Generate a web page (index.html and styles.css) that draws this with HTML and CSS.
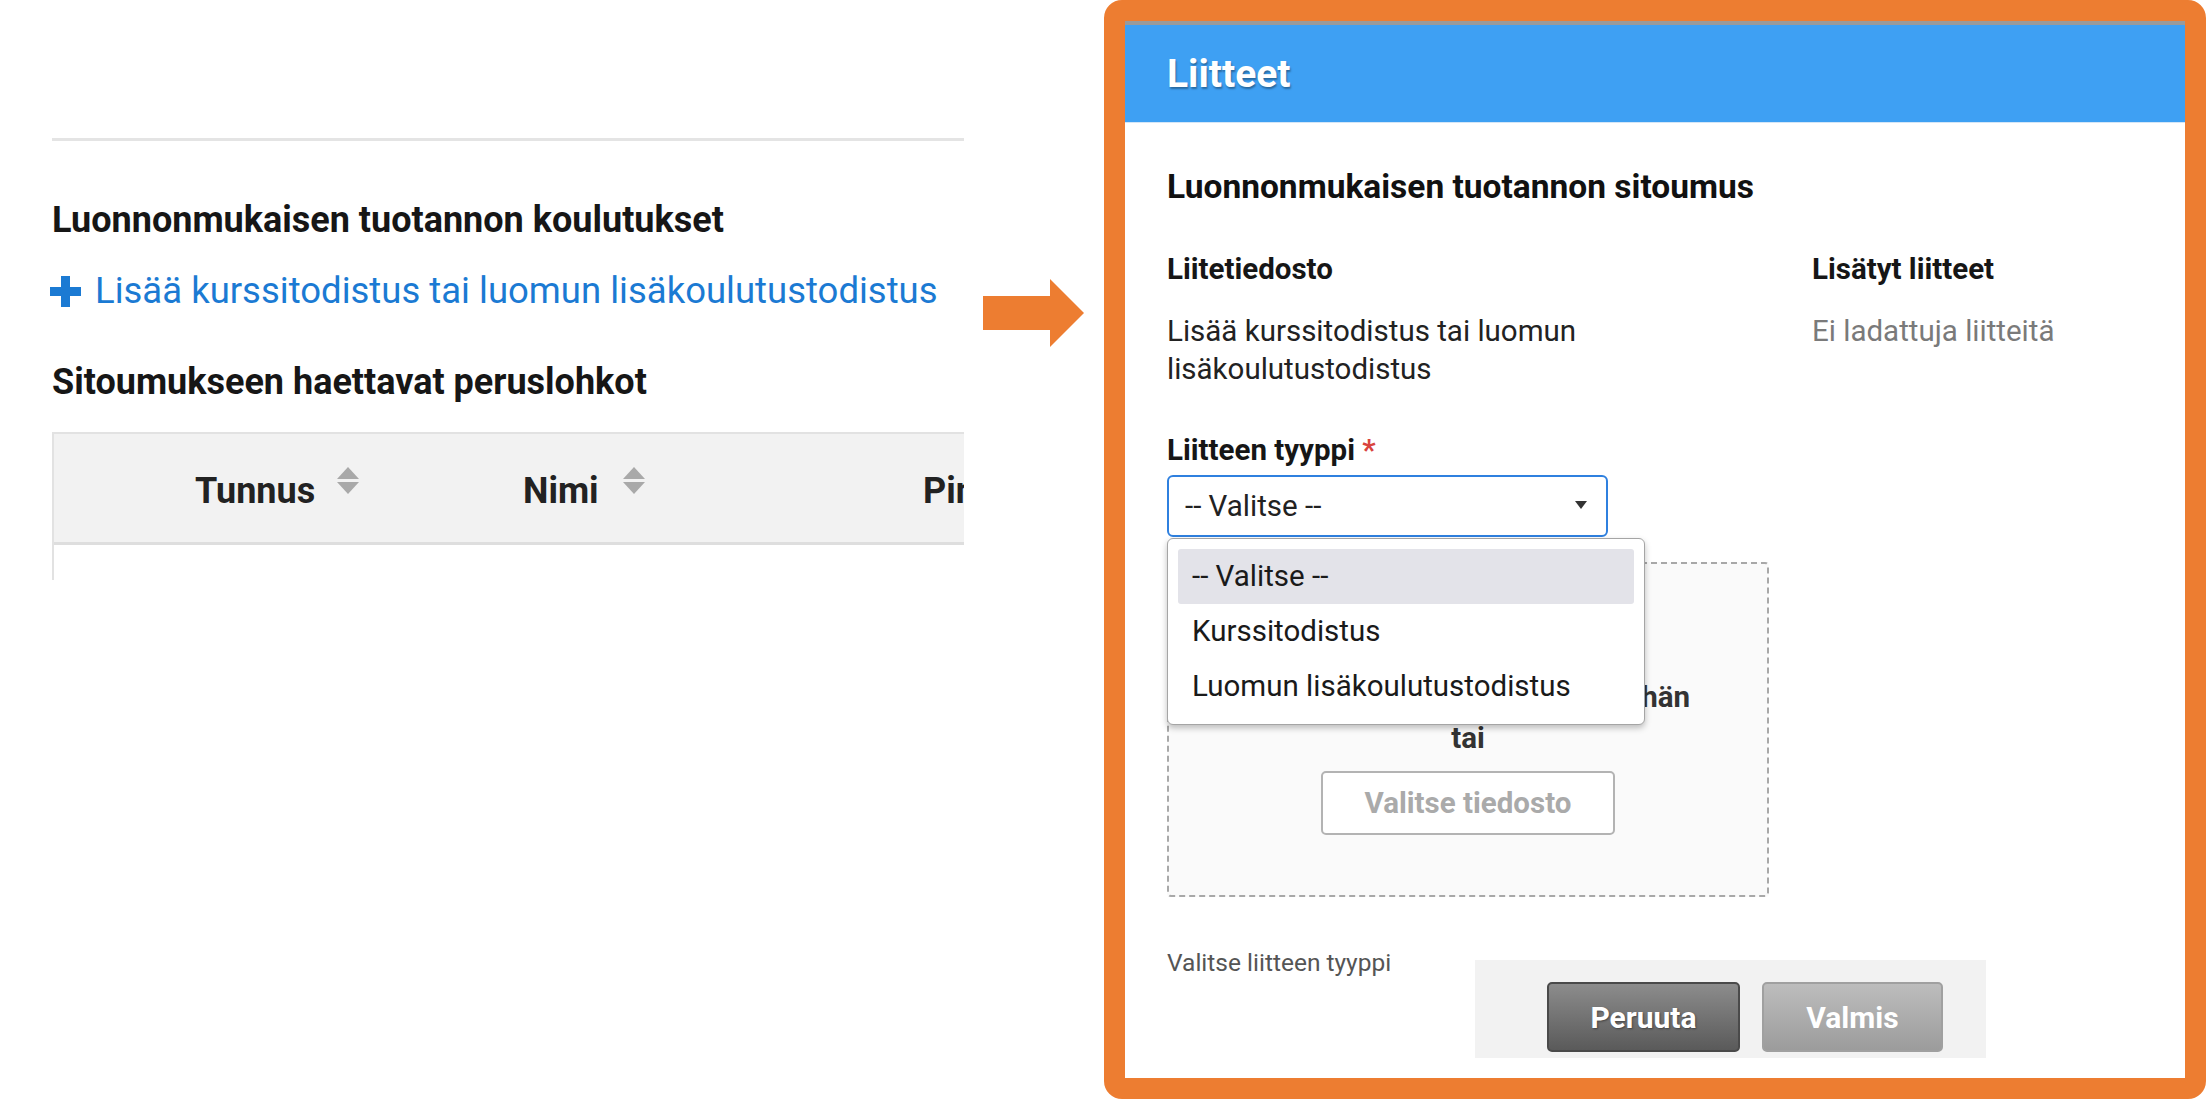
FILE: index.html
```html
<!DOCTYPE html>
<html>
<head>
	<title>Liitteet</title>

	<link rel="stylesheet" href="styles.css">

</head>
<body>

	<div class="stage">

		<!-- sivun sisältö taustalla -->
		<section class="page">
			<hr class="rule">
			<h3 class="section-title">Luonnonmukaisen tuotannon koulutukset</h3>
			<a class="add-link" href="#">
				<svg class="plus" width="31" height="31" viewBox="0 0 31 31"><rect x="11" y="0" width="9" height="31"/><rect x="0" y="11" width="31" height="9"/></svg>
				Lisää kurssitodistus tai luomun lisäkoulutustodistus
			</a>
			<h3 class="section-title second">Sitoumukseen haettavat peruslohkot</h3>

			<div class="table">
				<div class="thead">
					<div class="th th-tunnus">Tunnus
						<svg class="sort" width="22" height="28" viewBox="0 0 22 28"><polygon points="11,0 22,12 0,12"/><polygon points="0,15 22,15 11,27"/></svg>
					</div>
					<div class="th th-nimi">Nimi
						<svg class="sort" width="22" height="28" viewBox="0 0 22 28"><polygon points="11,0 22,12 0,12"/><polygon points="0,15 22,15 11,27"/></svg>
					</div>
					<div class="th">Pinta-ala</div>
				</div>
				<div class="tbody"></div>
			</div>
		</section>

		<div class="arrow">
			<svg width="101" height="68" viewBox="0 0 101 68"><polygon points="0,17 67,17 67,0 101,34 67,68 67,51 0,51"/></svg>
		</div>

		<!-- liitteet-dialogi -->
		<div class="frame">
			<div class="modal">
				<div class="modal-head">Liitteet</div>

				<div class="modal-body">
					<h4 class="modal-title">Luonnonmukaisen tuotannon sitoumus</h4>

					<div class="attach-grid">
						<div class="col-left">
							<div class="col-title">Liitetiedosto</div>
							<div class="desc">Lisää kurssitodistus tai luomun lisäkoulutustodistus</div>

							<div class="field-label">Liitteen tyyppi <span class="req">*</span></div>
							<div class="select-wrap">
								<div class="select">
									<span>-- Valitse --</span>
									<svg width="12" height="8" viewBox="0 0 12 8"><polygon points="0,0 12,0 6,8"/></svg>
								</div>
								<div class="dropdown">
									<div class="option active">-- Valitse --</div>
									<div class="option">Kurssitodistus</div>
									<div class="option">Luomun lisäkoulutustodistus</div>
								</div>
							</div>

							<div class="dropzone">
								<div class="drop-text">Vedä ja pudota liitetiedosto tähän</div>
								<div class="drop-text">tai</div>
								<button class="file-btn">Valitse tiedosto</button>
							</div>
						</div>

						<div class="col-right">
							<div class="col-title">Lisätyt liitteet</div>
							<div class="desc muted">Ei ladattuja liitteitä</div>
						</div>
					</div>

					<div class="modal-foot">
						<div class="hint">Valitse liitteen tyyppi</div>
						<div class="actions">
							<button class="btn btn-dark">Peruuta</button>
							<button class="btn btn-light">Valmis</button>
						</div>
					</div>
				</div>
			</div>
		</div>

	</div>

</body>
</html>
```

FILE: styles.css
```css
	body{
		margin: 0;
		background: #fff;
		font-family: Roboto, "Liberation Sans", sans-serif;
		color: #1a1a1a;
		overflow: hidden;
	}

	.stage{
		display: flex;
		align-items: flex-start;
		width: 2206px;
		height: 1099px;
	}

	/* vasen puoli */
	.page{
		width: 964px;
		height: 580px;
		padding: 138px 0 0 52px;
		box-sizing: border-box;
		overflow: hidden;
		flex: none;
	}

	.rule{
		margin: 0;
		border: 0;
		border-top: 3px solid #e4e4e4;
	}

	.section-title{
		margin: 58px 0 0;
		font-size: 36px;
		line-height: 42px;
		font-weight: 700;
		color: #161616;
		white-space: nowrap;
	}

	.section-title.second{
		margin-top: 49px;
	}

	.add-link{
		display: flex;
		align-items: center;
		gap: 14px;
		margin-top: 29px;
		font-size: 36.5px;
		line-height: 42px;
		color: #1b7ad3;
		text-decoration: none;
		white-space: nowrap;
	}

	.plus{
		fill: #1b7ad3;
		margin-left: -2px;
	}

	.table{
		width: 1300px;
		margin-top: 29px;
		border-top: 2px solid #e2e2e2;
		border-left: 2px solid #e2e2e2;
	}

	.thead{
		display: flex;
		height: 111px;
		padding-top: 6px;
		box-sizing: border-box;
		align-items: center;
		background: #f2f2f2;
		border-bottom: 3px solid #dedede;
	}

	.th{
		display: flex;
		align-items: flex-start;
		gap: 22px;
		font-size: 36px;
		line-height: 42px;
		font-weight: 700;
		color: #222;
		white-space: nowrap;
	}

	.th-tunnus{
		width: 468px;
		padding-left: 141px;
		box-sizing: border-box;
	}

	.th-nimi{
		width: 401px;
		padding-left: 1px;
		box-sizing: border-box;
		gap: 24px;
	}

	.sort{
		fill: #a9a9a9;
		margin-top: -3px;
	}

	.tbody{
		height: 40px;
	}

	/* nuoli */
	.arrow{
		margin: 279px 0 0 19px;
		width: 101px;
		height: 68px;
		flex: none;
	}

	.arrow svg{
		display: block;
		fill: #ed7d31;
	}

	/* dialogi */
	.frame{
		margin-left: 20px;
		width: 1102px;
		height: 1099px;
		border: 21px solid #ed7d31;
		border-radius: 18px;
		box-sizing: border-box;
		background: #fff;
		flex: none;
		overflow: hidden;
	}

	.modal-head{
		height: 97px;
		border-top: 4px solid #9a9a9a;
		background: #3ea0f3;
		display: flex;
		align-items: center;
		padding-left: 42px;
		font-size: 39px;
		font-weight: 700;
		color: #fff;
		text-shadow: 1px 2px 2px rgba(0,0,0,.35);
		box-shadow: 0 1px 0 #d4e6f7;
	}

	.modal-body{
		padding: 45px 42px 0;
		font-size: 29.5px;
		line-height: 38px;
		color: #222;
	}

	.modal-title{
		margin: 0;
		font-size: 33.5px;
		line-height: 40px;
		font-weight: 700;
		color: #111;
	}

	.attach-grid{
		display: grid;
		grid-template-columns: 645px 1fr;
		margin-top: 43px;
	}

	.col-title{
		font-weight: 700;
		color: #161616;
	}

	.desc{
		margin-top: 24px;
		padding-right: 40px;
	}

	.muted{
		color: #7a7a7a;
		padding-right: 0;
	}

	.field-label{
		margin-top: 43px;
		font-weight: 700;
		color: #161616;
	}

	.req{
		color: #d9443d;
	}

	.select-wrap{
		position: relative;
		margin-top: 6px;
	}

	.select{
		width: 441px;
		height: 62px;
		box-sizing: border-box;
		border: 2px solid #2f80df;
		border-radius: 6px;
		display: flex;
		align-items: center;
		justify-content: space-between;
		padding: 0 19px 0 16px;
		background: #fff;
	}

	.select svg{
		fill: #333;
		margin-top: -3px;
	}

	.dropdown{
		position: absolute;
		top: 63px;
		left: 0;
		width: 478px;
		box-sizing: border-box;
		padding: 10px;
		background: #fff;
		border: 1px solid #a5a5a5;
		border-radius: 6px;
		box-shadow: 0 3px 6px rgba(0,0,0,.25);
		z-index: 2;
	}

	.option{
		height: 55px;
		line-height: 55px;
		padding-left: 14px;
		color: #1a1a1a;
		border-radius: 3px;
	}

	.option.active{
		background: #e3e3e9;
	}

	.dropzone{
		margin-top: 25px;
		width: 602px;
		height: 335px;
		box-sizing: border-box;
		border: 2px dashed #a8a8a8;
		border-radius: 4px;
		background: #fafafa;
		padding-top: 113px;
		text-align: center;
	}

	.drop-text{
		font-weight: 700;
		line-height: 41px;
		color: #333;
		white-space: nowrap;
	}

	.file-btn{
		margin-top: 12px;
		width: 294px;
		height: 64px;
		background: #fff;
		border: 2px solid #b3b3b3;
		border-radius: 5px;
		font-family: inherit;
		font-size: 29.5px;
		font-weight: 700;
		color: #aaa;
	}

	.modal-foot{
		display: flex;
		align-items: flex-start;
		margin-top: 52px;
	}

	.hint{
		width: 308px;
		font-size: 24.5px;
		line-height: 28px;
		color: #555;
	}

	.actions{
		margin-top: 11px;
		width: 511px;
		height: 98px;
		box-sizing: border-box;
		padding: 22px 0 0 72px;
		background: #f2f2f2;
		display: flex;
		gap: 22px;
	}

	.btn{
		height: 70px;
		border-radius: 5px;
		font-family: inherit;
		font-size: 30px;
		font-weight: 700;
		color: #fff;
		text-shadow: 1px 1px 2px rgba(0,0,0,.4);
	}

	.btn-dark{
		width: 193px;
		background: linear-gradient(#8c8c8c, #5a5a5a);
		border: 2px solid #4a4a4a;
	}

	.btn-light{
		width: 181px;
		background: linear-gradient(#bdbdbd, #9c9c9c);
		border: 2px solid #a0a0a0;
		text-shadow: none;
	}
```
